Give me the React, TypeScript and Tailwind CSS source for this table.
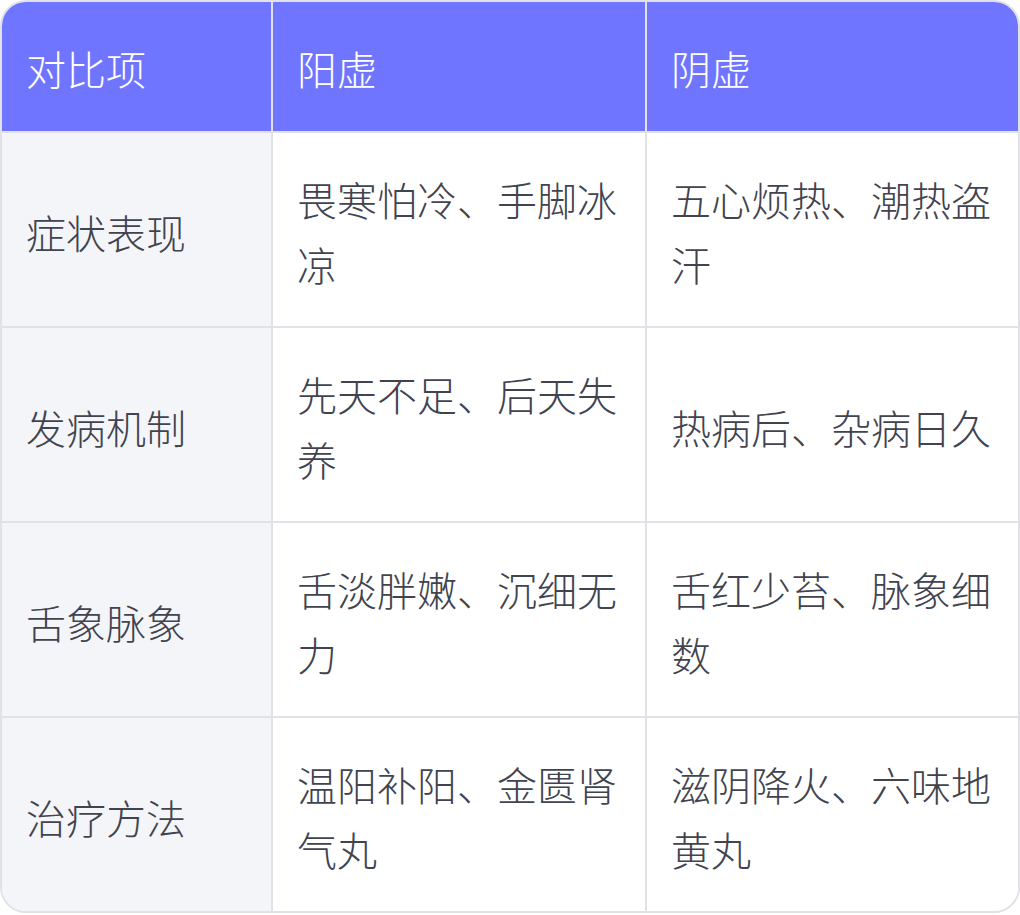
import { FC } from "react";

const HEADERS = ["对比项", "阳虚", "阴虚"];

const ROWS: string[][] = [
  ["症状表现", "畏寒怕冷、手脚冰凉", "五心烦热、潮热盗汗"],
  ["发病机制", "先天不足、后天失养", "热病后、杂病日久"],
  ["舌象脉象", "舌淡胖嫩、沉细无力", "舌红少苔、脉象细数"],
  ["治疗方法", "温阳补阳、金匮肾气丸", "滋阴降火、六味地黄丸"],
];

const App: FC = () => {
  return (
    <div className="min-h-screen bg-white font-['Noto_Sans_CJK_SC','Noto_Sans',sans-serif] text-[40px] font-light leading-[65px]">
      <div className="w-[1020px] overflow-hidden rounded-[26px] border-2 border-[#e1e2e8]">
        <div className="grid grid-cols-[271px_374px_1fr]">
          {HEADERS.map((h, i) => (
            <div
              key={h}
              className={`flex items-center border-b-2 border-[#e1e2e8] bg-[#7075ff] px-6 pt-[34px] pb-[30px] text-white ${
                i < 2 ? "border-r-2" : ""
              }`}
            >
              {h}
            </div>
          ))}

          {ROWS.map((row, r) =>
            row.map((cell, c) => (
              <div
                key={`${r}-${c}`}
                className={`flex items-center border-[#e1e2e8] px-6 pt-[34px] pb-[29px] text-[#41434f] ${
                  c < 2 ? "border-r-2" : ""
                } ${r < ROWS.length - 1 ? "border-b-2" : ""} ${
                  c === 0 ? "bg-[#f4f5f9]" : "bg-white"
                }`}
              >
                {cell}
              </div>
            ))
          )}
        </div>
      </div>
    </div>
  );
};

export default App;
